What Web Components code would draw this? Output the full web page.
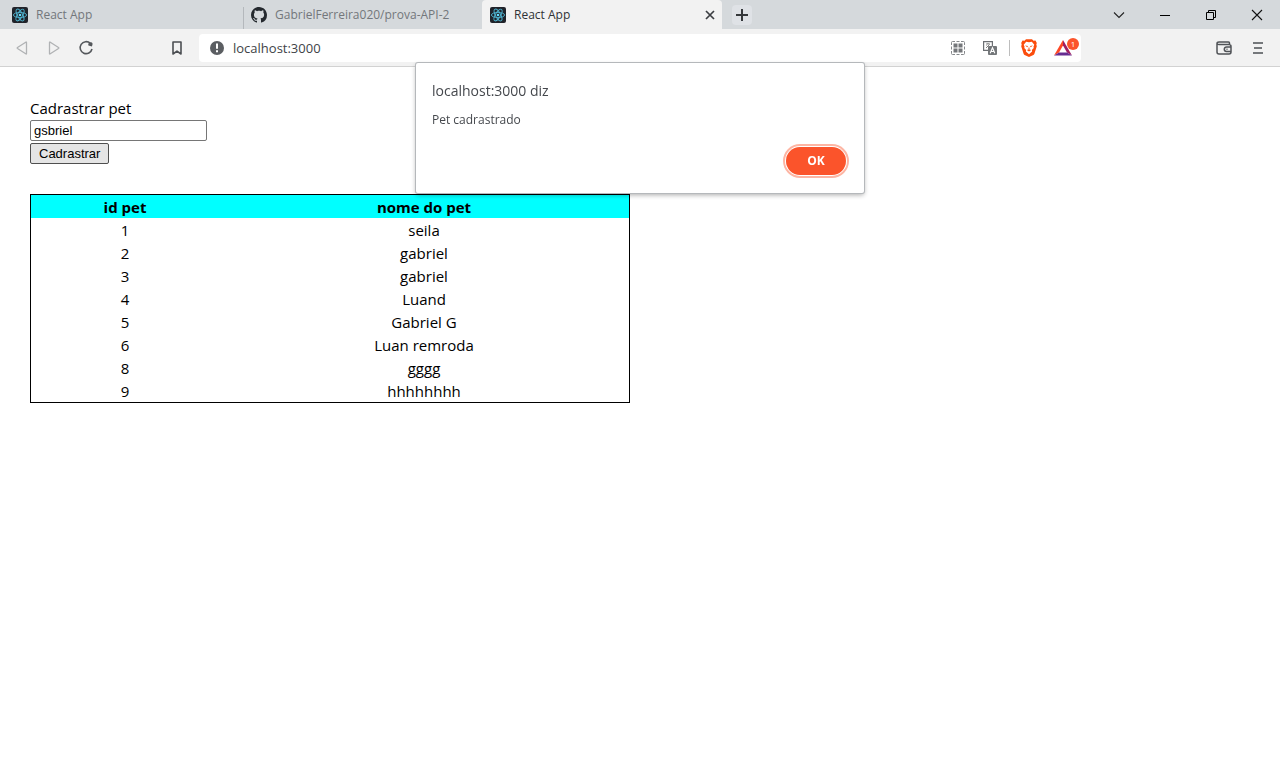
<!DOCTYPE html>
<html lang="pt-BR">
<head>
<meta charset="utf-8">
<title>React App</title>
<style>
html,body{margin:0;background:#fff}
body{font:15px/22px "Open Sans","Noto Sans",sans-serif;color:#000}
</style>
</head>
<body>
<browser-window>
  <tab-strip slot="tabs">
    <browser-tab icon="react">React App</browser-tab>
    <browser-tab icon="github" divided>GabrielFerreira020/prova-API-2</browser-tab>
    <browser-tab icon="react" active>React App</browser-tab>
  </tab-strip>
  <nav-bar slot="nav"></nav-bar>
  <pet-form></pet-form>
  <pet-table></pet-table>
  <alert-dialog slot="dialog"><span slot="title">localhost:3000 diz</span>Pet cadrastrado</alert-dialog>
</browser-window>
<script>
const define = (name, html, setup) => {
  const template = document.createElement('template');
  template.innerHTML = html;
  customElements.define(name, class extends HTMLElement {
    constructor() {
      super();
      this.attachShadow({mode: 'open'}).append(template.content.cloneNode(true));
    }
    connectedCallback() { if (setup) setup(this, this.shadowRoot); }
  });
};
const reset = `*{box-sizing:border-box}button{font:inherit;color:inherit;border:0;background:none;padding:0;margin:0;display:flex;align-items:center;justify-content:center;flex:none}svg{display:block;flex:none}`;

const favicons = {
  react: `<svg width="16" height="16" viewBox="0 0 16 16"><rect width="16" height="16" rx="2" fill="#20232a"/><g fill="none" stroke="#4fb3cf" stroke-width=".9"><ellipse cx="8" cy="8" rx="6.6" ry="2.6"/><ellipse cx="8" cy="8" rx="6.6" ry="2.6" transform="rotate(60 8 8)"/><ellipse cx="8" cy="8" rx="6.6" ry="2.6" transform="rotate(120 8 8)"/></g><circle cx="8" cy="8" r="1.3" fill="#61dafb"/></svg>`,
  github: `<svg width="16" height="16" viewBox="0 0 16 16"><path fill="#24292e" d="M8 0C3.58 0 0 3.58 0 8c0 3.54 2.29 6.53 5.47 7.59.4.07.55-.17.55-.38 0-.19-.01-.82-.01-1.49-2.01.37-2.53-.49-2.69-.94-.09-.23-.48-.94-.82-1.13-.28-.15-.68-.52-.01-.53.63-.01 1.08.58 1.23.82.72 1.21 1.87.87 2.33.66.07-.52.28-.87.51-1.07-1.78-.2-3.64-.89-3.64-3.95 0-.87.31-1.59.82-2.15-.08-.2-.36-1.02.08-2.12 0 0 .67-.21 2.2.82.64-.18 1.32-.27 2-.27s1.36.09 2 .27c1.53-1.04 2.2-.82 2.2-.82.44 1.1.16 1.92.08 2.12.51.56.82 1.27.82 2.15 0 3.07-1.87 3.75-3.65 3.95.29.25.54.73.54 1.48 0 1.07-.01 1.93-.01 2.2 0 .21.15.46.55.38A8.01 8.01 0 0 0 16 8c0-4.42-3.58-8-8-8z"/></svg>`
};

define('browser-tab', `<style>${reset}
:host{display:flex;align-items:center;width:240px;height:29px;padding:0 6px 0 12px;flex:0 1 auto;color:#73777b;font-size:12px;line-height:16px;min-width:0;box-sizing:border-box}
:host([divided]){position:relative;padding-left:11px}
:host([divided])::before{content:"";position:absolute;left:3px;top:7px;bottom:0;width:1px;background:#b4b8bc}
:host([active]){background:#f2f2f2;color:#303236;border-radius:4px 4px 0 0;padding-left:8px}
.label{flex:1;margin-left:8px;white-space:nowrap;overflow:hidden}
button{display:none;width:12px;height:16px}
:host([active]) button{display:flex}
</style><span class="icon"></span><span class="label"><slot></slot></span>
<button aria-label="Fechar guia"><svg width="10" height="10" viewBox="0 0 10 10"><path d="M1 1l8 8M9 1L1 9" stroke="#3b3e42" stroke-width="1.7"/></svg></button>`,
(host, root) => { root.querySelector('.icon').innerHTML = favicons[host.getAttribute('icon')]; });

define('tab-strip', `<style>${reset}
:host{display:flex;align-items:center;height:29px;background:#d5d9dc}
.tabs{display:flex;flex:0 1 722px;min-width:0}
::slotted([divided]){margin:0 2px 0 0}
.new{width:20px;height:20px;border-radius:4px;background:#dfe2e6;margin-left:10px}
.window{display:flex;margin-left:auto}
.window button{width:46px;height:29px}
</style><div class="tabs"><slot></slot></div>
<button class="new" aria-label="Nova guia"><svg width="12" height="12" viewBox="0 0 12 12"><path d="M0 6h12M6 0v12" stroke="#35383b" stroke-width="2"/></svg></button>
<div class="window">
<button aria-label="Pesquisar guias"><svg width="12" height="12" viewBox="0 0 12 12"><path d="M1 3.5l5 5 5-5" fill="none" stroke="#222" stroke-width="1.1"/></svg></button>
<button aria-label="Minimizar"><svg width="10" height="10" viewBox="0 0 10 10"><path d="M0 5.5h10" stroke="#000"/></svg></button>
<button aria-label="Restaurar"><svg width="10" height="10" viewBox="0 0 10 10"><path d="M.5 2.5h7v7h-7zM2.500 2.500v-2h7v7h-2" fill="none" stroke="#000"/></svg></button>
<button aria-label="Fechar"><svg width="12" height="12" viewBox="0 0 12 12"><path d="M1 1l10 10M11 1L1 11" stroke="#111" stroke-width="1.100"/></svg></button>
</div>`);

define('nav-bar', `<style>${reset}
:host{display:flex;align-items:center;height:38px;background:#f2f2f2;border-bottom:1px solid #d2d2d2;box-sizing:border-box}
.history{display:flex;padding-left:6px;flex:none}
.history button{width:32px;height:28px}
.mark{width:32px;height:28px;margin-left:59px}
.address{display:flex;align-items:center;flex:1;min-width:0;height:28px;background:#fff;border-radius:4px;margin-left:6px;padding:0 2px 0 10px}
input{flex:1;min-width:0;border:0;padding:0;margin:0 8px;outline:0;background:none;font:13px/20px "Open Sans","Noto Sans",sans-serif;color:#404347}
.address button{width:32px;height:28px}
.sep{width:1px;height:16px;background:#bdbdbd;margin:0 3px}
.address .rewards{position:relative;margin-left:2px}
.badge{position:absolute;right:0;top:4px;width:12px;height:12px;border-radius:6px;background:#fb542b;color:#fff;font-size:8px;line-height:12px;text-align:center}
.tools{display:flex;margin-left:126px;padding-right:5px;flex:none}
.tools button{width:34px;height:28px}
</style>
<div class="history">
<button aria-label="Voltar"><svg width="14" height="16" viewBox="0 0 14 16"><path d="M11.500 2.600v10.800q0 .9-.8.400L2.500 8.500q-.7-.5 0-1L10.700 2.200q.8-.5.8.4z" fill="none" stroke="#b0b2b4" stroke-width="1.300"/></svg></button>
<button aria-label="Avançar"><svg width="14" height="16" viewBox="0 0 14 16"><path d="M2.500 2.600v10.800q0 .9.8.400l8.200-5.300q.7-.5 0-1L3.300 2.200q-.8-.5-.8.4z" fill="none" stroke="#b0b2b4" stroke-width="1.300"/></svg></button>
<button aria-label="Recarregar"><svg width="16" height="16" viewBox="0 0 16 16"><path d="M12.300 3.300A6 6 0 1 0 14 9" fill="none" stroke="#55585c" stroke-width="1.600"/><path d="M10.200 3.800L12 2.500a1.700 1.700 0 0 1 2.500 1.900l-.6 2.100-3.500-1z" fill="#55585c"/></svg></button>
</div>
<button class="mark" aria-label="Favorito"><svg width="12" height="16" viewBox="0 0 12 16"><path d="M2 2h8v12l-4-2.900L2 14z" fill="none" stroke="#4c4f53" stroke-width="1.600" stroke-linejoin="round"/></svg></button>
<div class="address">
<svg width="16" height="16" viewBox="0 0 16 16"><circle cx="8" cy="8" r="7" fill="#5b5e62"/><path d="M8 3.500v5.300M8 10.300v2" stroke="#fff" stroke-width="2"/></svg>
<input aria-label="Endereço" value="localhost:3000">
<button aria-label="QR Code"><svg width="14" height="14" viewBox="0 0 14 14" fill="none"><path d="M.5 4V1.500q0-1 1-1H4m6 0h2.500q1 0 1 1V4m0 6v2.500q0 1-1 1H10m-6 0H1.500q-1 0-1-1V10M5.500.5h3M5.500 13.500h3M.5 5.500v3M13.500 5.500v3" stroke="#85888b"/><path d="M2.500 2.500h4v4h-4zm5 0h4v4h-4zm-5 5h4v4h-4zm5 0h4v4h-4z" fill="#74777a"/></svg></button>
<button aria-label="Traduzir"><svg width="14" height="14" viewBox="0 0 14 14"><path d="M.6.6h8.800v8.800H.6z" fill="#fff" stroke="#6c6f73" stroke-width="1.200"/><path d="M3 3h4M5 2v1M6.500 3.500L3 7M3.500 4.500l3 3" stroke="#777" stroke-width=".9"/><rect x="5" y="5" width="9" height="9" rx="1" fill="#74777a"/><path d="M7.200 12.200l2.300-5.500 2.300 5.500M8 10.500h3" fill="none" stroke="#fff" stroke-width="1.100"/></svg></button>
<span class="sep"></span>
<button aria-label="Brave Shields"><svg width="16" height="18" viewBox="0 0 16 18"><path d="M5 .2h6l1.500 1.600 2-.2 1.300 2.400-.5 1.500.5 1.700-2.400 7.500q-.3.700-1 1.200L8 18l-4.400-2.100q-.7-.5-1-1.200L.2 7.200l.5-1.700L.2 4l1.300-2.400 2 .2z" fill="#fb4c0c"/><path d="M8 3.300l2.800-.6 2.500 3-.8 1.900.2 1.300-1.800 2 .2 1.500L8 15.200l-3.100-2.800.2-1.500-1.800-2 .2-1.300-.8-1.900 2.500-3z" fill="#fff"/><path d="M4 6.400l3 .6-.7 1.300zM12 6.400L9 7l.7 1.300zM8 7.500l.6 2.500-.6.5-.6-.5zM5.800 11L8 10.200l2.200.8L8 12.500z" fill="#fb4c0c"/></svg></button>
<button class="rewards" aria-label="Brave Rewards"><svg width="20" height="16" viewBox="0 0 20 16"><path d="M10 0L1 15.500l5-3 4-7z" fill="#ff4724"/><path d="M10 0l9 15.500-5-3-4-7z" fill="#9e1f63"/><path d="M1 15.500h18l-5-3H6z" fill="#662d91"/></svg><span class="badge">1</span></button>
</div>
<div class="tools">
<button aria-label="Carteira"><svg width="16" height="14" viewBox="0 0 16 14"><path d="M13.500 3.500V2q0-1-1-1H3Q1 1 1 2.500V11q0 2 2 2h10q2 0 2-2V5.500q0-2-2-2H3Q1 3.500 1 2.500M15 6h-4.500a2.200 2.200 0 0 0 0 4.400H15M10.500 8.200h1" fill="none" stroke="#505357" stroke-width="1.500"/></svg></button>
<button aria-label="Menu"><svg width="10" height="12" viewBox="0 0 10 12"><path d="M0 1h10M1 6h8M0 11h10" stroke="#75787b" stroke-width="2"/></svg></button>
</div>`);

define('pet-form', `<style>
:host{display:block}
form{display:flex;flex-direction:column;align-items:flex-start;margin:0}
label{line-height:20px;margin-bottom:2px}
input{box-sizing:border-box;width:177px;height:21px;margin:0 0 2px;border:1px solid #767676;border-radius:2px;padding:1px 3px;font:13px/15px "Liberation Sans",sans-serif;color:#000}
button{box-sizing:border-box;height:21px;margin:0;border:1px solid #4f4f4f;border-radius:2px;background:#e5e5e5;padding:1px 8px;font:13px/15px "Liberation Sans",sans-serif;color:#000}
</style><form><label for="pet">Cadrastrar pet</label><input id="pet" value="gsbriel"><button type="button">Cadrastrar</button></form>`);

const pets = [[1,'seila'],[2,'gabriel'],[3,'gabriel'],[4,'Luand'],[5,'Gabriel G'],[6,'Luan remroda'],[8,'gggg'],[9,'hhhhhhhh']];
define('pet-table', `<style>
:host{display:block;max-width:600px;margin-top:30px;border:1px solid #000;box-sizing:border-box}
table{width:100%;border-collapse:collapse;table-layout:fixed;text-align:center}
th:first-child{width:188px}
th,td{padding:2px 0 0;line-height:21px}
thead{background:#0ff}
</style><table><thead><tr><th scope="col">id pet</th><th scope="col">nome do pet</th></tr></thead><tbody></tbody></table>`,
(host, root) => {
  root.querySelector('tbody').innerHTML = pets.map(([id, name]) => `<tr><td>${id}</td><td>${name}</td></tr>`).join('');
});

define('alert-dialog', `<style>
:host{display:block}
dialog{position:fixed;top:63px;left:0;right:0;margin:0 auto;box-sizing:border-box;width:448px;max-width:90%;padding:16px;border:0;border-radius:2px;background:#fff;color:#45484d;box-shadow:0 0 0 1px #b5b8bb,0 2px 5px #0005}
h2{margin:0 0 8px;font-size:14px;line-height:24px;font-weight:400}
p{margin:0 0 16px;font-size:12px;line-height:18px}
form{display:flex;justify-content:flex-end;margin:0;padding:2px}
button{width:60px;height:28px;border:0;border-radius:14px;background:#fb542b;color:#fff;font:700 12px/16px "Open Sans","Noto Sans",sans-serif;padding:0;outline:0;box-shadow:0 0 0 1px #fff,0 0 0 3px #fdb5a3}
</style><dialog open aria-labelledby="t"><h2 id="t"><slot name="title"></slot></h2><p><slot></slot></p><form method="dialog"><button>OK</button></form></dialog>`);

define('browser-window', `<style>
:host{display:block}
main{padding:31px 30px}
</style><header><slot name="tabs"></slot><slot name="nav"></slot></header><main><slot></slot></main><slot name="dialog"></slot>`);
</script>
</body>
</html>
